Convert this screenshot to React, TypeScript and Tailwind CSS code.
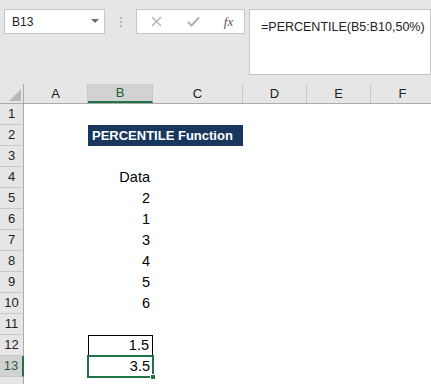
const cols = [
  { id: 'A', w: 'w-[64px]' },
  { id: 'B', w: 'w-[65px]' },
  { id: 'C', w: 'w-[90px]' },
  { id: 'D', w: 'w-[64px]' },
  { id: 'E', w: 'w-[64px]' },
  { id: 'F', w: 'w-[64px]' },
];

const data: Record<number, string> = {
  4: 'Data',
  5: '2',
  6: '1',
  7: '3',
  8: '4',
  9: '5',
  10: '6',
  12: '1.5',
  13: '3.5',
};

function Toolbar() {
  return (
    <div className="h-[84px] bg-[#e6e6e6] relative flex items-start pt-[9px] pl-[4px]">
      <div className="w-[101px] h-[25px] bg-white border border-[#c6c6c6] flex items-center justify-between pl-[7px] pr-[5px]">
        <span className="text-[12px] text-[#222]">B13</span>
        <svg width="8" height="5" viewBox="0 0 8 5">
          <path d="M0 0 H8 L4 4 Z" fill="#6e6e6e" />
        </svg>
      </div>
      <div className="w-[31px] h-[25px] flex flex-col items-center justify-center gap-[2px]">
        <span className="w-[2px] h-[2px] bg-[#b4b4b4]" />
        <span className="w-[2px] h-[2px] bg-[#b4b4b4]" />
        <span className="w-[2px] h-[2px] bg-[#b4b4b4]" />
      </div>
      <div className="w-[109px] h-[25px] bg-white border border-[#c6c6c6] flex items-center">
        <div className="w-[38px] flex justify-center">
          <svg width="11" height="11" viewBox="0 0 11 11">
            <path d="M1 1 L10 10 M10 1 L1 10" stroke="#b0b0b0" strokeWidth="1.3" />
          </svg>
        </div>
        <div className="w-[36px] flex justify-center">
          <svg width="13" height="11" viewBox="0 0 13 11">
            <path d="M1 6 L4.5 9.5 L12 1.5" stroke="#b0b0b0" strokeWidth="2" fill="none" />
          </svg>
        </div>
        <div className="flex-1 flex justify-center pl-[2px]">
          <span className="text-[13px] italic text-[#555] font-['Liberation_Serif',serif]">fx</span>
        </div>
      </div>
      <div className="ml-[4px] flex-1 h-[66px] bg-white border border-[#c6c6c6] pl-[11px] pt-[4px]">
        <span className="text-[12.5px] text-[#222]">=PERCENTILE(B5:B10,50%)</span>
      </div>
    </div>
  );
}

function HeaderRow() {
  return (
    <div className="flex h-[20px] border-b border-[#ababab] bg-[#e6e6e6]">
      <div className="w-[24px] shrink-0 border-r border-[#ababab] flex items-end justify-end pr-[2px] pb-[2px]">
        <svg width="12" height="12" viewBox="0 0 12 12">
          <path d="M12 0 V12 H0 Z" fill="#b9b9b9" />
        </svg>
      </div>
      {cols.map((c) => (
        <div
          key={c.id}
          className={`${c.w} shrink-0 border-r border-[#c8c8c8] flex items-center justify-center text-[13px] ${
            c.id === 'B' ? 'bg-[#d2d2d2] border-b-2 border-b-[#217346] text-[#1e5c3a]' : 'text-[#222]'
          }`}
        >
          {c.id}
        </div>
      ))}
    </div>
  );
}

function Row({ n }: { n: number }) {
  const selected = n === 13;
  const val = data[n];
  return (
    <div className="flex h-[21px]">
      <div
        className={`w-[24px] shrink-0 border-b border-[#c8c8c8] flex items-center justify-center text-[13px] ${
          selected
            ? 'bg-[#d2d2d2] border-r-2 border-r-[#217346] text-[#1e5c3a]'
            : 'bg-[#e6e6e6] border-r border-r-[#ababab] text-[#222]'
        }`}
      >
        {n < 14 ? n : ''}
      </div>
      <div className="w-[64px] shrink-0" />
      {n === 2 ? (
        <div className="w-[155px] shrink-0 bg-[#17375e] flex items-center pl-[4px]">
          <span className="text-[13px] font-bold text-white">PERCENTILE Function</span>
        </div>
      ) : (
        <>
          <div
            className={`w-[65px] shrink-0 relative flex items-center justify-end pr-[3px] text-[14.5px] text-black ${
              n === 12 ? 'border border-black' : ''
            }`}
          >
            {val}
            {selected && (
              <div className="absolute -left-[1px] -top-[1px] w-[67px] h-[23px] border-2 border-[#217346]">
                <div className="absolute -right-[4px] -bottom-[4px] w-[6px] h-[6px] bg-[#217346] border border-white" />
              </div>
            )}
          </div>
          <div className="w-[90px] shrink-0" />
        </>
      )}
    </div>
  );
}

export default function App() {
  const rows = Array.from({ length: 14 }, (_, i) => i + 1);
  return (
    <div className="w-[431px] h-[384px] overflow-hidden bg-white font-['Liberation_Sans',sans-serif]">
      <Toolbar />
      <HeaderRow />
      <div>
        {rows.map((n) => (
          <Row key={n} n={n} />
        ))}
      </div>
    </div>
  );
}
